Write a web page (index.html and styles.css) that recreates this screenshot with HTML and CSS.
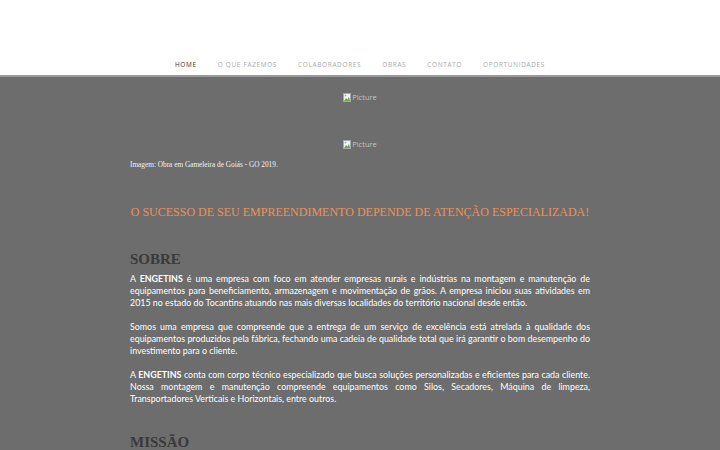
FILE: index.html
```html
<!DOCTYPE html>
<html lang="pt-BR">
<head>
<meta charset="utf-8">
<title>Engetins</title>
<link rel="stylesheet" href="styles.css">
</head>
<body>
<header class="header">
  <nav class="nav">
    <a class="nav-item active" href="#">HOME</a>
    <a class="nav-item" href="#">O QUE FAZEMOS</a>
    <a class="nav-item" href="#">COLABORADORES</a>
    <a class="nav-item" href="#">OBRAS</a>
    <a class="nav-item" href="#">CONTATO</a>
    <a class="nav-item" href="#">OPORTUNIDADES</a>
  </nav>
</header>
<main class="main">
  <div class="picture pic-1">
    <span class="broken"><svg class="broken-icon" width="8" height="9" viewBox="0 0 8 9"><rect x="0.5" y="0.5" width="7" height="8" fill="#f4f4f4" stroke="#a8a8a8"/><path d="M1 8 L3 5 L4.5 6.5 L6 4 L7 8 Z" fill="#6aa84f"/><circle cx="2.5" cy="2.5" r="1" fill="#8fb8e0"/></svg>Picture</span>
  </div>
  <div class="picture pic-2">
    <span class="broken"><svg class="broken-icon" width="8" height="9" viewBox="0 0 8 9"><rect x="0.5" y="0.5" width="7" height="8" fill="#f4f4f4" stroke="#a8a8a8"/><path d="M1 8 L3 5 L4.5 6.5 L6 4 L7 8 Z" fill="#6aa84f"/><circle cx="2.5" cy="2.5" r="1" fill="#8fb8e0"/></svg>Picture</span>
  </div>
  <p class="caption">Imagem: Obra em Gameleira de Goiás - GO 2019.</p>
  <h2 class="tagline">O SUCESSO DE SEU EMPREENDIMENTO DEPENDE DE ATENÇÃO ESPECIALIZADA!</h2>
  <h3 class="section-title">SOBRE</h3>
  <p class="text">A <strong>ENGETINS</strong> é uma empresa com foco em atender empresas rurais e indústrias na montagem e manutenção de equipamentos para beneficiamento, armazenagem e movimentação de grãos. A empresa iniciou suas atividades em 2015 no estado do Tocantins atuando nas mais diversas localidades do território nacional desde então.</p>
  <p class="text">Somos uma empresa que compreende que a entrega de um serviço de excelência está atrelada à qualidade dos equipamentos produzidos pela fábrica, fechando uma cadeia de qualidade total que irá garantir o bom desempenho do investimento para o cliente.</p>
  <p class="text">A <strong>ENGETINS</strong> conta com corpo técnico especializado que busca soluções personalizadas e eficientes para cada cliente. Nossa montagem e manutenção compreende equipamentos como Silos, Secadores, Máquina de limpeza, Transportadores Verticais e Horizontais, entre outros.</p>
  <h3 class="section-title mission">MISSÃO</h3>
</main>
</body>
</html>
```
FILE: styles.css
```css
html, body {
  margin: 0;
  padding: 0;
  height: 100%;
  overflow: hidden;
}
body {
  background: #6d6d6d;
  font-family: Lato, "Open Sans", sans-serif;
}
.header {
  background: #ffffff;
  height: 77px;
  border-bottom: 2px solid #9a9a9a;
  display: flex;
  align-items: flex-end;
  justify-content: center;
  box-sizing: border-box;
}
.nav {
  display: flex;
  gap: 21px;
  padding-bottom: 5px;
}
.nav-item {
  font-family: "Open Sans", sans-serif;
  font-size: 6.4px;
  letter-spacing: 0.7px;
  color: #a9a9a9;
  text-decoration: none;
  line-height: 10px;
}
.nav-item.active {
  color: #333333;
}
.main {
  width: 460px;
  margin: 0 auto;
  color: #ffffff;
}
.picture {
  display: flex;
  justify-content: center;
  height: 10px;
}
.pic-1 { padding-top: 15px; margin-bottom: 37px; }
.broken {
  font-family: "Open Sans", sans-serif;
  font-size: 7.5px;
  color: #c4c4c4;
  display: flex;
  align-items: center;
  line-height: 10px;
}
.broken-icon { margin-right: 1px; }
.caption {
  margin: 11px 0 0;
  font-family: "Liberation Serif", serif;
  font-size: 7.3px;
  line-height: 9px;
  color: #f2f2f2;
}
.tagline {
  margin: 35px 0 0;
  font-family: "Liberation Serif", serif;
  font-weight: normal;
  font-size: 12px;
  line-height: 16px;
  text-align: center;
  color: #ec925a;
  white-space: nowrap;
}
.section-title {
  margin: 29px 0 4px;
  font-family: "Liberation Serif", serif;
  font-weight: bold;
  font-size: 15px;
  line-height: 20px;
  color: #3a3a3a;
}
.mission { margin-top: 27px; }
.text {
  margin: 0 0 12px;
  font-size: 8.9px;
  line-height: 12px;
  text-align: justify;
  color: #ffffff;
}
.text strong { font-weight: 700; }
```
